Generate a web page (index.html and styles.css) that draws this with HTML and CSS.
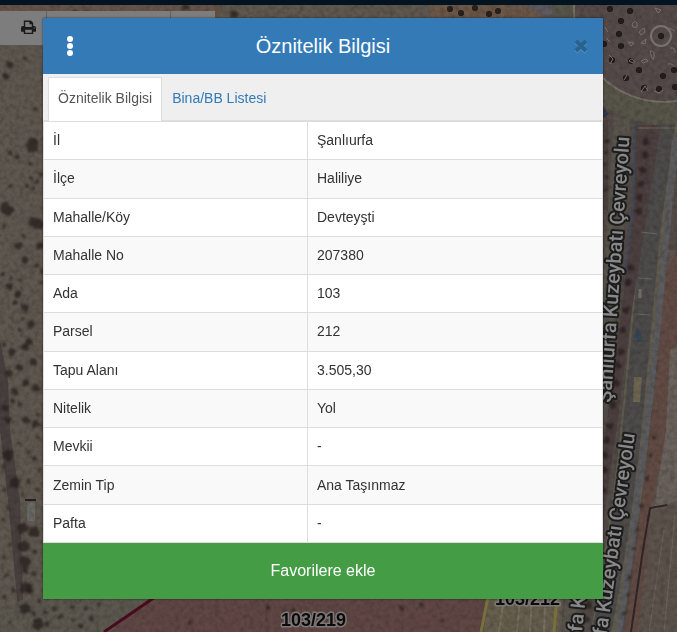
FILE: index.html
```html
<!DOCTYPE html>
<html lang="tr">
<head>
<meta charset="utf-8">
<meta name="viewport" content="width=device-width, initial-scale=1">
<title>Öznitelik Bilgisi</title>
<link rel="stylesheet" href="styles.css">
</head>
<body>
<svg class="map" viewBox="0 0 677 632" preserveAspectRatio="xMinYMin slice" aria-hidden="true">
  <defs>
    <filter id="grain" x="0" y="0" width="100%" height="100%" color-interpolation-filters="sRGB">
      <feTurbulence type="fractalNoise" baseFrequency=".2" numOctaves="4" seed="7"/>
      <feColorMatrix values="0 0 0 0 .15  0 0 0 0 .12  0 0 0 0 .1  1.6 1.2 0 0 -1.1"/>
    </filter>
    <filter id="soft"><feGaussianBlur stdDeviation=".7"/></filter>
    <filter id="rough" color-interpolation-filters="sRGB">
      <feTurbulence type="fractalNoise" baseFrequency=".25" numOctaves="2" seed="3"/>
      <feDisplacementMap in="SourceGraphic" scale="5" xChannelSelector="R" yChannelSelector="G"/>
      <feGaussianBlur stdDeviation=".8"/>
    </filter>
    <clipPath id="isle"><circle cx="664" cy="12" r="89"/></clipPath>
  </defs>
  <rect width="677" height="632" fill="#5f5850"/>
  <g filter="url(#soft)">
    <path d="M0 0H220V20H0z" fill="#655549"/>
    <path d="M430 0H610V20H430z" fill="#6c584a"/>
    <path d="M510 0Q532 6 548 20H570Q555 5 540 0z" fill="#5b5a5f"/>
    <path d="M0 340L8 380 10 430 20 500 24 632H20L8 500 0 430z" fill="#4a413f"/>
    <path d="M43 590H155L104 632H0V610z" fill="#5b5850"/>
    <path d="M155 594H490L481 640H100z" fill="#604644"/>
    <path d="M489 594H562L557 640H482z" fill="#665e4e"/>
    <path d="M570 0H677V640H562z" fill="#524b47"/>
    <path d="M668 250H677V640H632L645 500 655 390z" fill="#5d534e"/>
    <path d="M677 250L666 270 656 380 646 470 625 632H638L651 510 665 440 677 430z" fill="#644c44"/>
    <path d="M670 350L677 345V500L654 510 666 430z" fill="#6b645d"/>
    <g clip-path="url(#isle)"><path d="M570 0H677V110H570z" fill="#544b4c"/></g>
    <path d="M622 118Q618 230 598 400L570 632" fill="none" stroke="#58554d" stroke-width="17"/>
    <path d="M670 110Q659 190 653 240L638 400Q627 520 604 640" fill="none" stroke="#615d50" stroke-width="29"/>
    <path d="M668 110Q656 190 650 240L635 400Q624 520 600 640" fill="none" stroke="#4d4c4c" stroke-width="19"/>
    <path d="M675 140Q667 240 650 400L631 550 618 640" fill="none" stroke="#5c5c60" stroke-width="6"/>
    <path d="M636 125H661L650 195 632 310 615 440 596 570 604 440 622 310 632 210z" fill="#4d4141"/>
    <path d="M635 125L633 205 624 280" fill="none" stroke="#414b5c" stroke-width="2"/>
    <path d="M604 120V210" stroke="#4b4240" stroke-width="8"/>
    <circle cx="664" cy="12" r="101" fill="none" stroke="#59564b" stroke-width="22"/>
    <circle cx="664" cy="12" r="90" fill="none" stroke="#757165" stroke-width="2"/>
    <path d="M603 107L609 114 603 118z" fill="#303849"/>
    <path d="M637 128H677M641 232L657 234M638 278L652 279M635 314L650 315" stroke="#6f695b" stroke-width="1"/>
    <path d="M638 328L633 338H637V342H641V338H644z" fill="#354654"/>
    <path d="M634 377H642L640 402H633z" fill="#6e6753"/>
    <path d="M640 289V298" stroke="#77756c" stroke-width="3"/>
    <path d="M667 505L650 508 643 550 631 632" fill="none" stroke="#2d2625" stroke-width="2"/>
    <path d="M664 530L649 632M675 515L664 632" fill="none" stroke="#6b655e" stroke-width="1"/>
    <path d="M504 598L499 632M520 598L517 632M532 598L530 632M545 598L544 632" stroke="#787062" stroke-width="2"/>
    <path d="M27 502H35V521H27z" fill="#6b6a66"/>
    <path d="M25 500H36" stroke="#27201f" stroke-width="2"/>
  </g>
  <rect width="677" height="632" filter="url(#grain)" opacity=".28"/>
  <g class="spots" filter="url(#rough)">
    <path class="spot-lg" d="M33 143h0M32 147h0M34 222h0M38 224h0M8 210h0M6 208h0M8 455h0M15 483h0M23 528h0M24 546h0M34 532h0M25 562h0M26 588h0M25 609h0M38 624h0"/>
    <path class="spot-md" d="M10 65h0M6 76h0M8 420h0M18 246h0M25 260h0M40 246h0M9 287h0M18 294h0M25 308h0M31 325h0M29 342h0M12 352h0M25 347h0M33 362h0M19 368h0M9 373h0M25 383h0M36 388h0M15 392h0M26 420h0M36 424h0M5 408h0M25 570h0M30 590h0M74 14h0M80 16h0M86 14h0M186 7h0M234 14h0"/>
    <path class="spot-sm" d="M25 59h0M35 109h0M10 153h0M17 157h0M30 164h0M31 178h0M37 182h0M27 186h0M10 186h0M33 189h0M41 174h0M4 226h0M23 236h0M37 266h0M42 272h0M3 274h0M11 278h0M20 280h0M15 303h0M22 319h0M19 330h0M4 345h0M41 282h0M12 401h0M20 405h0M38 415h0M19 443h0M28 452h0M38 438h0M34 459h0M40 470h0M4 466h0M5 490h0M22 494h0M29 481h0M38 490h0M8 508h0M3 520h0M10 544h0M4 557h0M35 552h0M6 575h0M13 590h0M34 574h0M39 601h0M4 597h0M10 622h0M34 613h0"/>
    <path class="spot-sm" d="M45 612h0M54 609h0M60 617h0M73 607h0M86 609h0M99 604h0M47 624h0M74 620h0M91 619h0M80 626h0M268 608h0M285 612h0M294 610h0M190 622h0M401 608h0M421 605h0M442 620h0"/>
    <path class="spot-md" d="M646 142h0M645 155h0M643 170h0M641 184h0M640 197h0M638 211h0M631 268h0M628 282h0M626 310h0M623 330h0M621 352h0M618 365h0M616 383h0M613 405h0M610 426h0M607 440h0M605 455h0M604 470h0M603 490h0M589 605h0M587 619h0"/>
    <path class="spot-sm" d="M607 141h0M606 153h0M605 165h0M606 177h0M605 190h0M641 505h0M637 530h0M634 548h0M630 577h0M628 594h0M625 614h0M650 455h0M654 438h0M647 479h0"/>
  </g>
  <g class="spots isle" filter="url(#soft)">
    <path class="spot-sm" d="M450 9h0M461 13h0M475 8h0M489 14h0M498 11h0M610 9h0M630 11h0M621 21h0M619 34h0M621 46h0M604 44h0M612 60h0M626 78h0M639 70h0M663 76h0M644 88h0M659 89h0M675 87h0M661 36h0M631 61h0M674 70h0"/>
  </g>
  <g class="rings">
    <circle cx="661" cy="36" r="10"/>
    <path d="M632 24q4-5 5 0t-4 3zM639 32l5-4 1 4-4 3zM628 42l6 1-3 3zM641 43l5-4-1 5zM605 27l3 5M606 38l4 4M609 55l4 4-3 5M629 61q3-4 5 0t-5 0M641 61l5-2 2 2-5 2zM650 51q5-1 4 6t-4-6zM655 8l6 2-3 3zM669 28l6 3M670 48q6-1 5 5M641 92l4-6 3 5M654 91l5 2 4-3M624 80l3-5M668 64q5-1 6 3"/>
  </g>
  <path d="M155 597L104 632" fill="none" stroke="#470b20" stroke-width="3"/>
  <path d="M488 597L481 632M557 597L554 632" fill="none" stroke="#77703b" stroke-width="3"/>
  <g class="road-name">
    <text transform="translate(611 403) rotate(-86)">Şanlıurfa Kuzeybatı Çevreyolu</text>
    <text transform="translate(635 434) rotate(-82)" text-anchor="end">Şanlıurfa Kuzeybatı Çevreyolu</text>
    <text transform="translate(582 632) rotate(-84)">fa Kuzeybatı</text>
  </g>
  <g class="parcel-no">
    <text x="281" y="626">103/219</text>
    <text x="495" y="605">103/212</text>
  </g>
</svg>

<div class="topbar"></div>
<div class="toolbar">
  <button class="tool" type="button" aria-label="Yazdır">
    <svg viewBox="0 0 16 15" aria-hidden="true">
      <path fill-rule="evenodd" d="M3 0H10.5L13 2.5V6H14Q16 6 16 8V11.5Q16 12 15.500 12H13V14.500H3V12H.5Q0 12 0 11.500V8Q0 6 2 6H3zM4.500 1.500V7H11.500V4H9V1.500zM4.500 10V13H11.500V10zM13.500 7.500V8.500H14.500V7.500z"/>
    </svg>
  </button>
  <span class="tool-group"></span>
  <span class="tool-end"></span>
</div>

<div class="overlay">
  <section class="modal" role="dialog" aria-labelledby="modal-title">
    <header class="modal-header">
      <button class="menu" type="button" aria-label="Menü">
        <svg viewBox="0 0 6 20" aria-hidden="true"><circle cx="3" cy="3" r="3"/><circle cx="3" cy="10" r="3"/><circle cx="3" cy="17" r="3"/></svg>
      </button>
      <h1 id="modal-title">Öznitelik Bilgisi</h1>
      <button class="close" type="button" aria-label="Kapat">
        <svg viewBox="0 0 14 14" aria-hidden="true"><path class="close-glow" d="M2 3L12 13M12 3L2 13"/><path d="M2 2L12 12M12 2L2 12"/></svg>
      </button>
    </header>
    <nav class="tabs">
      <a class="tab active" href="#oznitelik">Öznitelik Bilgisi</a>
      <a class="tab" href="#bina">Bina/BB Listesi</a>
    </nav>
    <table class="attributes" id="oznitelik">
      <tbody>
        <tr><th scope="row">İl</th><td>Şanlıurfa</td></tr>
        <tr><th scope="row">İlçe</th><td>Haliliye</td></tr>
        <tr><th scope="row">Mahalle/Köy</th><td>Devteyşti</td></tr>
        <tr><th scope="row">Mahalle No</th><td>207380</td></tr>
        <tr><th scope="row">Ada</th><td>103</td></tr>
        <tr><th scope="row">Parsel</th><td>212</td></tr>
        <tr><th scope="row">Tapu Alanı</th><td>3.505,30</td></tr>
        <tr><th scope="row">Nitelik</th><td>Yol</td></tr>
        <tr><th scope="row">Mevkii</th><td>-</td></tr>
        <tr><th scope="row">Zemin Tip</th><td>Ana Taşınmaz</td></tr>
        <tr><th scope="row">Pafta</th><td>-</td></tr>
      </tbody>
    </table>
    <button class="favorite" type="button">Favorilere ekle</button>
  </section>
</div>
</body>
</html>
```
FILE: styles.css
```css
* {
  box-sizing: border-box;
}

body {
  margin: 0;
  min-height: 100vh;
  overflow: hidden;
  background: #5d554d;
  color: #333;
  font: 14px/20px "Liberation Sans", Arial, sans-serif;
}

button {
  margin: 0;
  padding: 0;
  border: 0;
  background: none;
  font-family: inherit;
  cursor: pointer;
}

/* Map */
.map {
  position: fixed;
  inset: 0;
  z-index: -1;
  width: 100%;
  height: 100%;
}

.spots path {
  fill: none;
  stroke: #241d1b;
  stroke-linecap: round;
  opacity: 0.75;
}

.spots .spot-lg { stroke-width: 11px; }
.spots .spot-md { stroke-width: 7px; }
.spots .spot-sm { stroke-width: 4px; }

.isle path {
  stroke: #0d090a;
}

.spots.isle .spot-sm {
  stroke-width: 6px;
}

.rings {
  fill: none;
  stroke: #77716f;
  stroke-width: 1px;
}

.rings circle {
  stroke-width: 2px;
}

.road-name {
  font: 500 20px Roboto, sans-serif;
  fill: #898989;
  stroke: #1c1c1c;
  stroke-width: 4px;
  stroke-linejoin: round;
  paint-order: stroke;
}

.parcel-no {
  font: bold 18px "Liberation Sans", Arial, sans-serif;
  fill: #0b0b0b;
  stroke: #7d7877;
  stroke-width: 3px;
  stroke-linejoin: round;
  paint-order: stroke;
}

/* Page bars under the dialog */
.topbar {
  height: 5px;
  background: #031320;
}

.toolbar {
  display: flex;
  width: 215px;
  height: 34px;
  margin-top: 6px;
  background: #7d7d7d;
}

.tool {
  display: flex;
  flex: 0 0 47px;
  align-items: center;
  justify-content: flex-end;
  padding: 0 10px 2px 0;
  border-right: 1px solid #626262;
}

.tool svg {
  width: 15px;
  height: 15px;
  fill: #1a1a1a;
}

.tool-group {
  flex: 1;
  border-right: 1px solid #626262;
}

.tool-end {
  flex: 0 0 44px;
}

/* Dialog */
.overlay {
  position: absolute;
  inset: 0;
  padding: 18px 74px 33px 43px;
}

.modal {
  display: flex;
  flex-direction: column;
  background: #fff;
  box-shadow: 0 0 2px rgba(0, 0, 0, 0.6);
}

.modal-header {
  display: grid;
  grid-template-columns: 1fr auto 1fr;
  align-items: center;
  height: 56px;
  padding: 0 15px 0 20px;
  background: #337ab7;
  color: #fff;
}

.modal-header h1 {
  margin: 0 5px 0 0;
  font-size: 20px;
  font-weight: 400;
  line-height: 28px;
}

.menu,
.close {
  display: flex;
  width: 14px;
}

.menu {
  justify-content: center;
}

.close {
  justify-self: end;
}

.menu svg {
  width: 6px;
  height: 20px;
  fill: #fff;
}

.close svg {
  width: 14px;
  height: 14px;
  overflow: visible;
  fill: none;
  stroke: #29628f;
  stroke-width: 4px;
}

.close .close-glow {
  stroke: #5c95c5;
}

.tabs {
  display: flex;
  padding: 3px 5px 0;
  border-bottom: 1px solid #ddd;
  background: #efefef;
}

.tab {
  height: 44px;
  margin-bottom: -1px;
  padding: 10px 9px;
  border: 1px solid transparent;
  border-bottom: 0;
  color: #337ab7;
  line-height: 20px;
  text-decoration: none;
}

.tab.active {
  border-color: #ddd;
  background: #fff;
  color: #555;
}

.attributes {
  width: 100%;
  height: 422px;
  border-collapse: collapse;
}

.attributes th,
.attributes td {
  padding: 7px 9px 8px;
  border: 1px solid #ddd;
  font-weight: 400;
  text-align: left;
}

.attributes th {
  width: 264px;
}

.attributes tr:nth-child(even) {
  background: #f9f9f9;
}

.favorite {
  height: 56px;
  background: #449d44;
  color: #fff;
  font-size: 16px;
  line-height: 24px;
}
```
